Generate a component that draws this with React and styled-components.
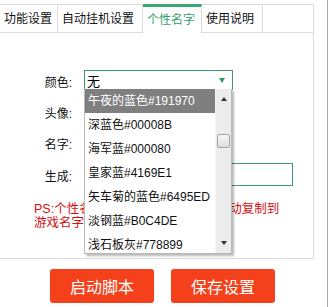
import React, { useState } from 'react';
import styled, { createGlobalStyle } from 'styled-components';

const GlobalStyle = createGlobalStyle`
  html, body {
    margin: 0;
    padding: 0;
    background: #fff;
  }
  body {
    font-family: "Liberation Sans", "Noto Sans CJK SC", sans-serif;
    color: #222;
  }
`;

const tabs = [
  { id: 'func', label: '功能设置', width: 58 },
  { id: 'auto', label: '自动挂机设置', width: 85 },
  { id: 'name', label: '个性名字', width: 59 },
  { id: 'help', label: '使用说明', width: 61 },
];

const colors = [
  '午夜的蓝色#191970',
  '深蓝色#00008B',
  '海军蓝#000080',
  '皇家蓝#4169E1',
  '矢车菊的蓝色#6495ED',
  '淡钢蓝#B0C4DE',
  '浅石板灰#778899',
];

const App = () => {
  const [activeTab, setActiveTab] = useState('name');
  const [hovered, setHovered] = useState(0);

  return (
    <Window>
      <GlobalStyle />
      <Main>
        <TabBar>
          {tabs.map((t) => (
            <Tab
              key={t.id}
              $width={t.width}
              $active={activeTab === t.id}
              onClick={() => setActiveTab(t.id)}
            >
              {t.label}
            </Tab>
          ))}
        </TabBar>

        <Panel>
          <Form>
            <Row>
              <Label>颜色:</Label>
              <Select>
                <span>无</span>
                <Caret />
              </Select>
            </Row>
            <Row>
              <Label>头像:</Label>
            </Row>
            <Row>
              <Label>名字:</Label>
            </Row>
            <Row $tall>
              <Label>生成:</Label>
              <TextField />
            </Row>
          </Form>
          <Note>
            PS:个性名字生成后点击生成框将自动复制到
            <br />
            游戏名字栏中，直接粘贴即可
          </Note>
        </Panel>

        <Buttons>
          <ActionButton>启动脚本</ActionButton>
          <ActionButton>保存设置</ActionButton>
        </Buttons>
      </Main>

      {/* open colour list of the select */}
      <Dropdown>
        <List>
          {colors.map((c, i) => (
            <Option key={c} $selected={hovered === i} onMouseEnter={() => setHovered(i)}>
              {c}
            </Option>
          ))}
        </List>
        <Scrollbar>
          <ArrowUp />
          <Track>
            <Thumb />
          </Track>
          <ArrowDown />
        </Scrollbar>
      </Dropdown>
    </Window>
  );
};

// Styled Components
const Window = styled.div`
  position: relative;
  width: 327px;
  height: 307px;
  border-right: 1px solid #a9a9a9;
  overflow: hidden;
`;

const Main = styled.div`
  width: 314px;
  padding-top: 4px;
`;

const TabBar = styled.div`
  display: flex;
  height: 27px;
  border-top: 1px solid #dcdcdc;
  border-bottom: 1px solid #dcdcdc;
  border-right: 1px solid #dcdcdc;
`;

const Tab = styled.div`
  box-sizing: border-box;
  width: ${(p) => p.$width}px;
  border-right: 1px solid #dcdcdc;
  font-size: 12px;
  line-height: 14px;
  padding-top: ${(p) => (p.$active ? '6px' : '7px')};
  padding-left: 4px;
  color: ${(p) => (p.$active ? '#34a06c' : '#111')};
  background: #fff;
  cursor: pointer;
  white-space: nowrap;
  ${(p) =>
    p.$active &&
    `
    margin-top: -1px;
    margin-bottom: -1px;
    border-top: 3px solid #3aa874;
    height: 29px;
  `}
`;

const Panel = styled.div`
  box-sizing: border-box;
  height: 226px;
  border-right: 1px solid #dcdcdc;
  border-bottom: 1px solid #dcdcdc;
  padding-top: 37px;
`;

const Form = styled.div`
  display: flex;
  flex-direction: column;
  gap: 11px;
`;

const Row = styled.div`
  display: flex;
  align-items: center;
  height: ${(p) => (p.$tall ? '23px' : '20px')};
`;

const Label = styled.div`
  width: 72px;
  padding-right: 12px;
  text-align: right;
  font-size: 12px;
  color: #111;
  padding-top: 2px;
`;

const Select = styled.div`
  box-sizing: border-box;
  width: 149px;
  height: 20px;
  border: 1px solid #3a9a6c;
  display: flex;
  align-items: center;
  justify-content: space-between;
  padding: 0 7px 0 2px;
  font-size: 13px;
  color: #000;
`;

const Caret = styled.span`
  width: 0;
  height: 0;
  border-left: 3.5px solid transparent;
  border-right: 3.5px solid transparent;
  border-top: 5px solid #2f9a5e;
  margin-top: 1px;
`;

const TextField = styled.div`
  box-sizing: border-box;
  width: 209px;
  height: 23px;
  border: 1px solid #3a9a7a;
`;

const Note = styled.div`
  margin-top: 16px;
  padding-left: 34px;
  font-size: 12.5px;
  line-height: 14px;
  color: #d41010;
  white-space: nowrap;
`;

const Buttons = styled.div`
  display: flex;
  gap: 17px;
  padding-left: 50px;
  margin-top: 10px;
`;

const ActionButton = styled.button`
  width: 104px;
  height: 34px;
  border: none;
  border-radius: 3px;
  background: #f5411b;
  color: #fff;
  font-family: "Noto Sans CJK SC", sans-serif;
  font-size: 16px;
  cursor: pointer;
  padding: 0;
`;

const Dropdown = styled.div`
  position: absolute;
  left: 84px;
  top: 89px;
  width: 148px;
  height: 165px;
  display: flex;
  background: #fff;
  border: 1px solid #b9b9b9;
  border-top: none;
  box-sizing: border-box;
  box-shadow: 2px 2px 2px rgba(0, 0, 0, 0.28);
`;

const List = styled.div`
  flex: 1;
  overflow: hidden;
`;

const Option = styled.div`
  height: 24px;
  line-height: 24px;
  padding-left: 3px;
  font-size: 12px;
  white-space: nowrap;
  color: ${(p) => (p.$selected ? '#fff' : '#111')};
  background: ${(p) => (p.$selected ? '#7f7f7f' : 'transparent')};
`;

const Scrollbar = styled.div`
  width: 15px;
  display: flex;
  flex-direction: column;
  align-items: center;
  background: #ececec;
  border-left: 1px solid #f4f4f4;
`;

const ArrowUp = styled.div`
  margin-top: 8px;
  width: 0;
  height: 0;
  border-left: 3.5px solid transparent;
  border-right: 3.5px solid transparent;
  border-bottom: 4px solid #333;
`;

const ArrowDown = styled.div`
  margin-bottom: 8px;
  width: 0;
  height: 0;
  border-left: 3.5px solid transparent;
  border-right: 3.5px solid transparent;
  border-top: 4px solid #333;
`;

const Track = styled.div`
  flex: 1;
  width: 100%;
  padding-top: 33px;
  box-sizing: border-box;
  display: flex;
  justify-content: center;
`;

const Thumb = styled.div`
  width: 13px;
  height: 14px;
  box-sizing: border-box;
  border: 1px solid #a2a2a2;
  border-radius: 2px;
  background: linear-gradient(#f6f6f6, #dedede);
`;

export default App;
